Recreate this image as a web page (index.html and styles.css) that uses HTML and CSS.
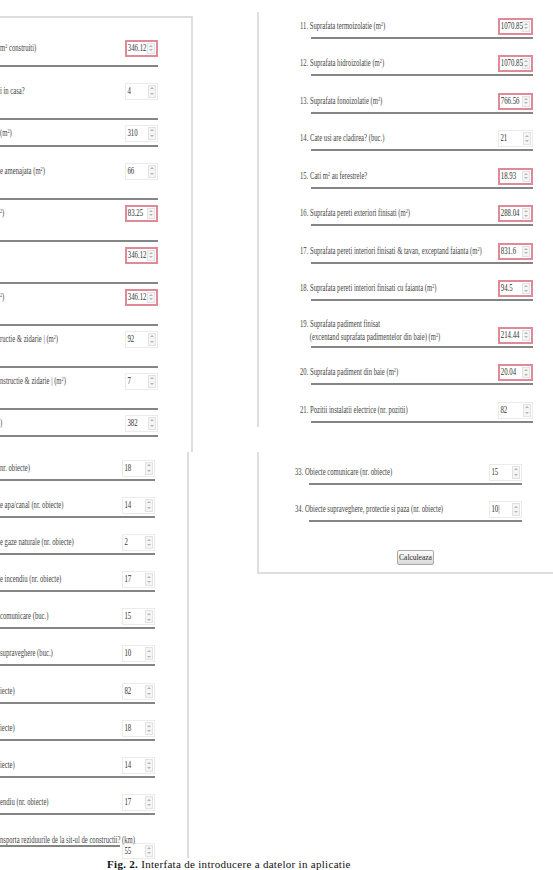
FILE: index.html
```html
<!DOCTYPE html>
<html lang="ro">
<head>
    <meta charset="UTF-8">
    <meta name="viewport" content="width=device-width, initial-scale=1.0">
    <title>Fig. 2 - Formular de calcul</title>
    <link rel="stylesheet" href="styles.css">
</head>
<body>
    <div class="figure">
        <div class="col col-left">
            <!-- first form, left edge cropped -->
            <section class="panel panel-a">
                <div class="field">
                    <span class="label"><span class="txt">m<sup>2</sup> construiti)</span></span>
                    <span class="num bad"><span class="val">346.12</span><span class="spin"></span></span>
                </div>
                <div class="field after-gap">
                    <span class="label"><span class="txt">i in casa?</span></span>
                    <span class="num"><span class="val">4</span><span class="spin"></span></span>
                </div>
                <div class="field shallow">
                    <span class="label"><span class="txt">(m<sup>2</sup>)</span></span>
                    <span class="num"><span class="val">310</span><span class="spin"></span></span>
                </div>
                <div class="field after-gap">
                    <span class="label"><span class="txt">e amenajata (m<sup>2</sup>)</span></span>
                    <span class="num"><span class="val">66</span><span class="spin"></span></span>
                </div>
                <div class="field">
                    <span class="label"><span class="txt"><sup>2</sup>)</span></span>
                    <span class="num bad"><span class="val">83.25</span><span class="spin"></span></span>
                </div>
                <div class="field">
                    <span class="label"></span>
                    <span class="num bad"><span class="val">346.12</span><span class="spin"></span></span>
                </div>
                <div class="field">
                    <span class="label"><span class="txt"><sup>2</sup>)</span></span>
                    <span class="num bad"><span class="val">346.12</span><span class="spin"></span></span>
                </div>
                <div class="field">
                    <span class="label"><span class="txt">ructie &amp; zidarie | (m<sup>2</sup>)</span></span>
                    <span class="num"><span class="val">92</span><span class="spin"></span></span>
                </div>
                <div class="field">
                    <span class="label"><span class="txt">nstructie &amp; zidarie | (m<sup>2</sup>)</span></span>
                    <span class="num"><span class="val">7</span><span class="spin"></span></span>
                </div>
                <div class="field shallow">
                    <span class="label"><span class="txt">)</span></span>
                    <span class="num"><span class="val">382</span><span class="spin"></span></span>
                </div>
            </section>

            <section class="panel panel-b">
                <div class="field">
                    <span class="label"><span class="txt">nr. obiecte)</span></span>
                    <span class="num"><span class="val">18</span><span class="spin"></span></span>
                </div>
                <div class="field">
                    <span class="label"><span class="txt">e apa/canal (nr. obiecte)</span></span>
                    <span class="num"><span class="val">14</span><span class="spin"></span></span>
                </div>
                <div class="field">
                    <span class="label"><span class="txt">e gaze naturale (nr. obiecte)</span></span>
                    <span class="num"><span class="val">2</span><span class="spin"></span></span>
                </div>
                <div class="field">
                    <span class="label"><span class="txt">e incendiu (nr. obiecte)</span></span>
                    <span class="num"><span class="val">17</span><span class="spin"></span></span>
                </div>
                <div class="field">
                    <span class="label"><span class="txt">comunicare (buc.)</span></span>
                    <span class="num"><span class="val">15</span><span class="spin"></span></span>
                </div>
                <div class="field">
                    <span class="label"><span class="txt">supraveghere (buc.)</span></span>
                    <span class="num"><span class="val">10</span><span class="spin"></span></span>
                </div>
                <div class="field">
                    <span class="label"><span class="txt">iecte)</span></span>
                    <span class="num"><span class="val">82</span><span class="spin"></span></span>
                </div>
                <div class="field">
                    <span class="label"><span class="txt">iecte)</span></span>
                    <span class="num"><span class="val">18</span><span class="spin"></span></span>
                </div>
                <div class="field">
                    <span class="label"><span class="txt">iecte)</span></span>
                    <span class="num"><span class="val">14</span><span class="spin"></span></span>
                </div>
                <div class="field">
                    <span class="label"><span class="txt">endiu (nr. obiecte)</span></span>
                    <span class="num"><span class="val">17</span><span class="spin"></span></span>
                </div>
                <div class="field wrap">
                    <span class="label"><span class="txt">nsporta reziduurile de la sit-ul de constructii? (km)</span></span>
                    <span class="num"><span class="val">55</span><span class="spin"></span></span>
                </div>
            </section>
        </div>

        <div class="col col-right">
            <section class="panel panel-c">
                <div class="field">
                    <span class="label"><span class="txt">11. Suprafata termoizolatie (m<sup>2</sup>)</span></span>
                    <span class="num bad"><span class="val">1070.85</span><span class="spin"></span></span>
                </div>
                <div class="field">
                    <span class="label"><span class="txt">12. Suprafata hidroizolatie (m<sup>2</sup>)</span></span>
                    <span class="num bad"><span class="val">1070.85</span><span class="spin"></span></span>
                </div>
                <div class="field">
                    <span class="label"><span class="txt">13. Suprafata fonoizolatie (m<sup>2</sup>)</span></span>
                    <span class="num bad"><span class="val">766.56</span><span class="spin"></span></span>
                </div>
                <div class="field">
                    <span class="label"><span class="txt">14. Cate usi are cladirea? (buc.)</span></span>
                    <span class="num"><span class="val">21</span><span class="spin"></span></span>
                </div>
                <div class="field">
                    <span class="label"><span class="txt">15. Cati m<sup>2</sup> au ferestrele?</span></span>
                    <span class="num bad"><span class="val">18.93</span><span class="spin"></span></span>
                </div>
                <div class="field">
                    <span class="label"><span class="txt">16. Suprafata pereti exteriori finisati (m<sup>2</sup>)</span></span>
                    <span class="num bad"><span class="val">288.04</span><span class="spin"></span></span>
                </div>
                <div class="field">
                    <span class="label"><span class="txt">17. Suprafata pereti interiori finisati &amp; tavan, exceptand faianta (m<sup>2</sup>)</span></span>
                    <span class="num bad"><span class="val">831.6</span><span class="spin"></span></span>
                </div>
                <div class="field">
                    <span class="label"><span class="txt">18. Suprafata pereti interiori finisati cu faianta (m<sup>2</sup>)</span></span>
                    <span class="num bad"><span class="val">94.5</span><span class="spin"></span></span>
                </div>
                <div class="field tall">
                    <span class="label"><span class="txt">19. Suprafata padiment finisat<span class="indent">(excentand suprafata padimentelor din baie) (m<sup>2</sup>)</span></span></span>
                    <span class="num bad"><span class="val">214.44</span><span class="spin"></span></span>
                </div>
                <div class="field">
                    <span class="label"><span class="txt">20. Suprafata padiment din baie (m<sup>2</sup>)</span></span>
                    <span class="num bad"><span class="val">20.04</span><span class="spin"></span></span>
                </div>
                <div class="field">
                    <span class="label"><span class="txt">21. Pozitii instalatii electrice (nr. pozitii)</span></span>
                    <span class="num"><span class="val">82</span><span class="spin"></span></span>
                </div>
            </section>

            <section class="panel panel-d">
                <div class="field">
                    <span class="label"><span class="txt">33. Obiecte comunicare (nr. obiecte)</span></span>
                    <span class="num"><span class="val">15</span><span class="spin"></span></span>
                </div>
                <div class="field">
                    <span class="label"><span class="txt">34. Obiecte supraveghere, protectie si paza (nr. obiecte)</span></span>
                    <span class="num"><span class="val">10|</span><span class="spin"></span></span>
                </div>
                <button class="btn">Calculeaza</button>
            </section>
        </div>
    </div>

    <p class="caption"><b>Fig. 2.</b> Interfata de introducere a datelor in aplicatie</p>
</body>
</html>
```

FILE: styles.css
```css
* {
    box-sizing: border-box;
}

body {
    margin: 0;
    width: 553px;
    height: 870px;
    overflow: hidden;
    background-color: #fff;
    color: #454545;
    font-family: "Liberation Serif", "Times New Roman", serif;
}

.figure {
    display: flex;
    height: 858px;
}

.col {
    display: flex;
    flex-direction: column;
}

.col-left {
    flex: none;
    width: 257px;
}

.col-right {
    flex: 1;
    min-width: 0;
}

/* form panels */
.panel {
    border: 0 solid #dedede;
}

.panel-a {
    flex: none;
    margin-top: 16px;
    width: 193px;
    height: 436px;
    border-top-width: 2px;
    border-right-width: 2px;
    padding: 21.5px 33px 0 0;
}

.panel-b {
    flex: none;
    width: 189px;
    height: 406px;
    border-right-width: 2px;
    padding: 7.5px 32px 0 0;
}

.panel-c {
    flex: none;
    margin-top: 12px;
    height: 415px;
    border-left-width: 2px;
    padding: 5.5px 20px 0 52px;
}

.panel-d {
    flex: none;
    margin-top: 25px;
    height: 122px;
    border-left-width: 2px;
    border-bottom-width: 2px;
    padding: 11.5px 31px 0 50px;
}

/* one question: label, number box, rule below */
.field {
    display: flex;
    align-items: center;
    margin-top: 16.5px;
    padding-bottom: 2px;
    border-bottom: 2px solid #858585;
}

.field:first-child {
    margin-top: 0;
}

.panel-a .field {
    margin-top: 5px;
    padding-bottom: 18px;
}

.panel-a .field:first-child {
    margin-top: 0;
    padding-bottom: 8px;
}

.panel-a .field.after-gap {
    margin-top: 16px;
}

.panel-a .field.shallow {
    padding-bottom: 3px;
}

.panel-b .field {
    margin-top: 16.2px;
}

.panel-b .field:first-child {
    margin-top: 0;
}

.panel-b .field.wrap {
    align-items: flex-start;
    margin-top: 18.5px;
    padding-bottom: 0;
    border-bottom: 0;
}

.field.wrap .label {
    flex: none;
    width: 120px;
    margin-right: 2px;
    padding-bottom: 2px;
    border-bottom: 2px solid #858585;
}

.field.wrap .num {
    margin-top: 9px;
    height: 16px;
}

.field.tall {
    align-items: flex-end;
}

.label {
    flex: 1;
    min-width: 0;
    white-space: nowrap;
    font-size: 9.5px;
    line-height: 13px;
    height: 13px;
}

.panel-c .label {
    margin-left: -11px;
}

.panel-d .label {
    margin-left: -14px;
}

.field.tall .label {
    height: 26px;
}

.txt {
    display: inline-block;
    transform: scaleX(0.7);
    transform-origin: 0 50%;
}

.indent {
    display: block;
    padding-left: 14px;
}

sup {
    font-size: 6px;
    line-height: 0;
    vertical-align: 3px;
}

/* number input with spinner */
.num {
    flex: none;
    display: flex;
    width: 33px;
    height: 17px;
    background-color: #fff;
    border: 1px solid #ebebeb;
}

.panel-c .num {
    width: 35px;
}

.num.bad {
    border: 2px solid #e08a99;
}

.val {
    flex: 1;
    min-width: 0;
    padding-left: 2px;
    font-size: 9.5px;
    line-height: 15px;
    white-space: nowrap;
    color: #333;
    transform: scaleX(0.72);
    transform-origin: 0 50%;
}

.num.bad .val {
    line-height: 13px;
    padding-left: 1px;
}

.field.wrap .val {
    line-height: 14px;
}

.spin {
    flex: none;
    width: 8px;
    margin: 1px;
    display: flex;
    flex-direction: column;
    justify-content: space-around;
    align-items: center;
    background-color: #f5f5f5;
    border: 1px solid #e2e2e2;
}

.spin::before,
.spin::after {
    content: "";
    border-left: 2px solid transparent;
    border-right: 2px solid transparent;
}

.spin::before {
    border-bottom: 2px solid #b5b5b5;
}

.spin::after {
    border-top: 2px solid #b5b5b5;
}

.btn {
    display: block;
    width: 37px;
    height: 15px;
    margin: 28px auto 0;
    padding: 0;
    font-family: inherit;
    font-size: 7.5px;
    color: #333;
    border: 1px solid #a9a9a9;
    border-radius: 2px;
    background: linear-gradient(#fbfbfb, #dadada);
}

.caption {
    margin: 0 0 0 107px;
    font-size: 11px;
    line-height: 12px;
    letter-spacing: 0.3px;
    white-space: nowrap;
    color: #111;
}
```
